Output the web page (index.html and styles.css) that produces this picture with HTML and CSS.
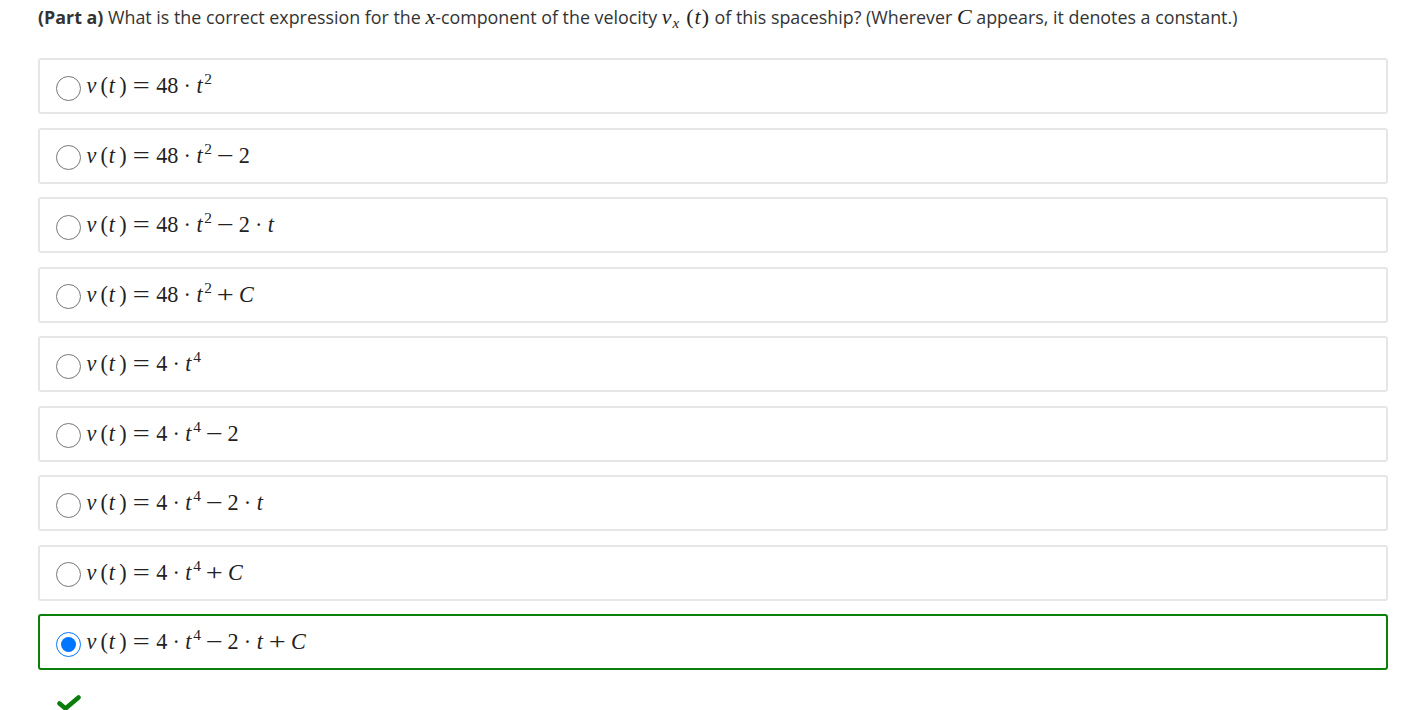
FILE: index.html
```html
<!DOCTYPE html>
<html>
<head>
<meta charset="utf-8">
<link rel="stylesheet" href="styles.css">
</head>
<body>
<div class="page">
  <p class="question"><b>(Part a)</b> What is the correct expression for the <span class="mi">x</span>-component of the velocity <span class="mi">v</span><sub class="mi sub">x</sub><span class="sp"></span><span class="mo">(</span><span class="mi">t</span><span class="mo">)</span> of this spaceship? (Wherever <span class="mi">C</span> appears, it denotes a constant.)</p>
  <div class="options">
    <label class="opt"><input type="radio" name="a"><span class="math"><i>v</i><span class="p">(</span><i>t</i><span class="p">)</span><span class="r">=</span>48<span class="d">·</span><i>t</i><sup>2</sup></span></label>
    <label class="opt"><input type="radio" name="a"><span class="math"><i>v</i><span class="p">(</span><i>t</i><span class="p">)</span><span class="r">=</span>48<span class="d">·</span><i>t</i><sup>2</sup><span class="b">−</span>2</span></label>
    <label class="opt"><input type="radio" name="a"><span class="math"><i>v</i><span class="p">(</span><i>t</i><span class="p">)</span><span class="r">=</span>48<span class="d">·</span><i>t</i><sup>2</sup><span class="b">−</span>2<span class="d">·</span><i>t</i></span></label>
    <label class="opt"><input type="radio" name="a"><span class="math"><i>v</i><span class="p">(</span><i>t</i><span class="p">)</span><span class="r">=</span>48<span class="d">·</span><i>t</i><sup>2</sup><span class="b">+</span><i>C</i></span></label>
    <label class="opt"><input type="radio" name="a"><span class="math"><i>v</i><span class="p">(</span><i>t</i><span class="p">)</span><span class="r">=</span>4<span class="d">·</span><i>t</i><sup>4</sup></span></label>
    <label class="opt"><input type="radio" name="a"><span class="math"><i>v</i><span class="p">(</span><i>t</i><span class="p">)</span><span class="r">=</span>4<span class="d">·</span><i>t</i><sup>4</sup><span class="b">−</span>2</span></label>
    <label class="opt"><input type="radio" name="a"><span class="math"><i>v</i><span class="p">(</span><i>t</i><span class="p">)</span><span class="r">=</span>4<span class="d">·</span><i>t</i><sup>4</sup><span class="b">−</span>2<span class="d">·</span><i>t</i></span></label>
    <label class="opt"><input type="radio" name="a"><span class="math"><i>v</i><span class="p">(</span><i>t</i><span class="p">)</span><span class="r">=</span>4<span class="d">·</span><i>t</i><sup>4</sup><span class="b">+</span><i>C</i></span></label>
    <label class="opt correct"><input type="radio" name="a" checked><span class="math"><i>v</i><span class="p">(</span><i>t</i><span class="p">)</span><span class="r">=</span>4<span class="d">·</span><i>t</i><sup>4</sup><span class="b">−</span>2<span class="d">·</span><i>t</i><span class="b">+</span><i>C</i></span></label>
  </div>
  <div class="check">
    <svg width="24" height="16" viewBox="0 0 24 16"><path d="M2.5 8.5 L8.5 13.5 L21.5 2.5" fill="none" stroke="#0a7d0a" stroke-width="4.5" stroke-linecap="round" stroke-linejoin="round"/></svg>
  </div>
</div>
</body>
</html>
```
FILE: styles.css
```css
html, body {
  margin: 0;
  padding: 0;
  background: #fff;
}
.page {
  padding: 4px 36px 0 38px;
  font-family: "Open Sans", "Liberation Sans", sans-serif;
  color: #333;
}
.question {
  margin: 0 0 28px 0;
  height: 26px;
  font-size: 17.85px;
  line-height: 26px;
  white-space: nowrap;
}
.question b {
  font-weight: 700;
}
.mi {
  font-family: "Liberation Serif", "DejaVu Serif", serif;
  font-style: italic;
  font-size: 22px;
  line-height: 0;
  color: #222;
}
.mi.sub {
  font-size: 15px;
  vertical-align: -4px;
  margin-left: 1px;
}
.sp {
  display: inline-block;
  width: 6px;
}
.mo {
  font-family: "Liberation Serif", serif;
  font-size: 22px;
  line-height: 0;
  color: #222;
  padding: 0 1px;
}
.options {
  display: flex;
  flex-direction: column;
  gap: 13.5px;
  width: 1350px;
}
.opt {
  display: flex;
  align-items: center;
  gap: 5px;
  height: 52px;
  box-sizing: content-box;
  border: 2px solid #e6e6e6;
  border-radius: 3px;
  padding: 0 0 0 16px;
}
.opt.correct {
  border-color: #0a800a;
}
.opt input {
  width: 25px;
  height: 25px;
  margin: 4px 0 0 0;
  accent-color: #0075ff;
}
.math,
.math i,
.math span,
.math sup {
  font-family: "Liberation Serif", "Times New Roman", serif;
}
.math {
  font-size: 22.2px;
  line-height: 26px;
  color: #222;
  white-space: nowrap;
}
.math i {
  font-style: italic;
  padding: 0 1.2px 0 0.4px;
}
.math .p {
  margin: 0 0.6px;
}
.math i + .p {
  margin-left: 3px;
}
.math .r,
.math .b {
  display: inline-block;
  transform: scaleX(1.36);
}
.math .r {
  margin: 0 8.3px;
}
.math .b {
  margin: 0 7.1px;
}
.math .d {
  margin: 0 5.1px;
}
.math sup {
  font-size: 15.4px;
  vertical-align: 9px;
  line-height: 0;
  margin-left: 0.5px;
}
.check {
  padding: 25px 0 0 19px;
}
.check svg { display: block; }
```
